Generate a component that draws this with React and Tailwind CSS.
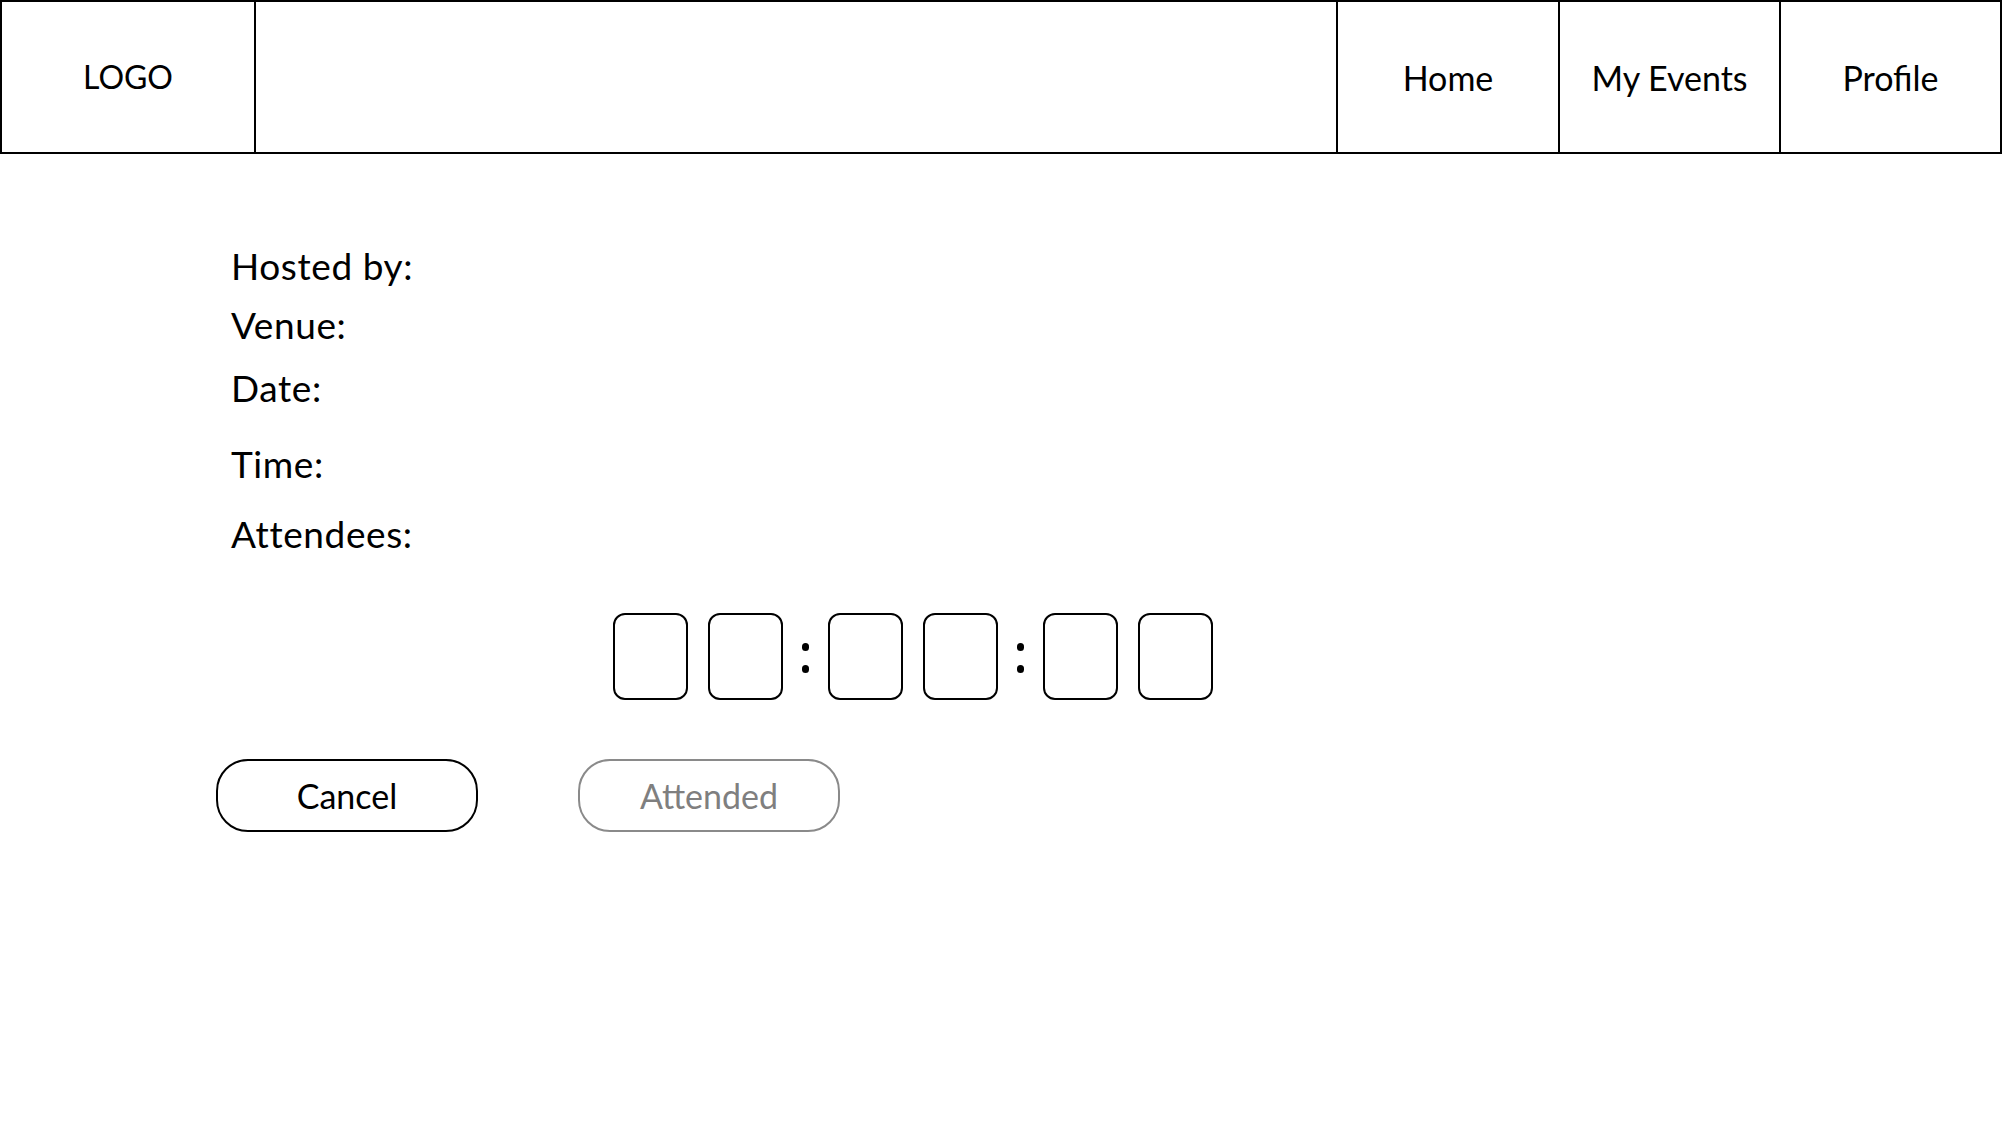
import React from "react";

function Box() {
  return <div className="w-[75px] h-[87px] border-2 border-black rounded-[12px] shrink-0" />;
}

function Colon() {
  return (
    <div className="w-[45px] h-[87px] flex flex-col items-center justify-center gap-[14px] shrink-0 pt-[3px]">
      <div className="w-[7px] h-[8px] rounded-full bg-black" />
      <div className="w-[7px] h-[8px] rounded-full bg-black" />
    </div>
  );
}

export default function App() {
  return (
    <div className="w-[2002px] h-[1126px] bg-white text-black font-['Lato',sans-serif]">
      <header className="flex h-[154px] w-full border-2 border-black">
        <div className="w-[254px] border-r-2 border-black flex items-center justify-center text-[32px]">
          LOGO
        </div>
        <div className="flex-1" />
        <div className="w-[222px] border-l-2 border-black flex items-center justify-center text-[34px]">
          Home
        </div>
        <div className="w-[221px] border-l-2 border-black flex items-center justify-center text-[34px]">
          My Events
        </div>
        <div className="w-[221px] border-l-2 border-black flex items-center justify-center text-[34px]">
          Profile
        </div>
      </header>

      <main className="pt-[92px]">
        <div className="ml-[231px] text-[37px] leading-[40px] tracking-[0.6px]">
          <div>Hosted by:</div>
          <div className="mt-[19px]">Venue:</div>
          <div className="mt-[23px]">Date:</div>
          <div className="mt-[36px]">Time:</div>
          <div className="mt-[30px]">Attendees:</div>
        </div>

        <div className="ml-[613px] mt-[59px] flex items-center">
          <Box />
          <div className="w-[20px] shrink-0" />
          <Box />
          <Colon />
          <Box />
          <div className="w-[20px] shrink-0" />
          <Box />
          <Colon />
          <Box />
          <div className="w-[20px] shrink-0" />
          <Box />
        </div>

        <div className="ml-[216px] mt-[59px] flex gap-[100px]">
          <button className="w-[262px] h-[73px] border-2 border-black rounded-[32px] text-[34px] flex items-center justify-center bg-white">
            Cancel
          </button>
          <button className="w-[262px] h-[73px] border-2 border-[#8a8a8a] rounded-[32px] text-[34px] text-[#7f7f7f] flex items-center justify-center bg-white">
            Attended
          </button>
        </div>
      </main>
    </div>
  );
}
